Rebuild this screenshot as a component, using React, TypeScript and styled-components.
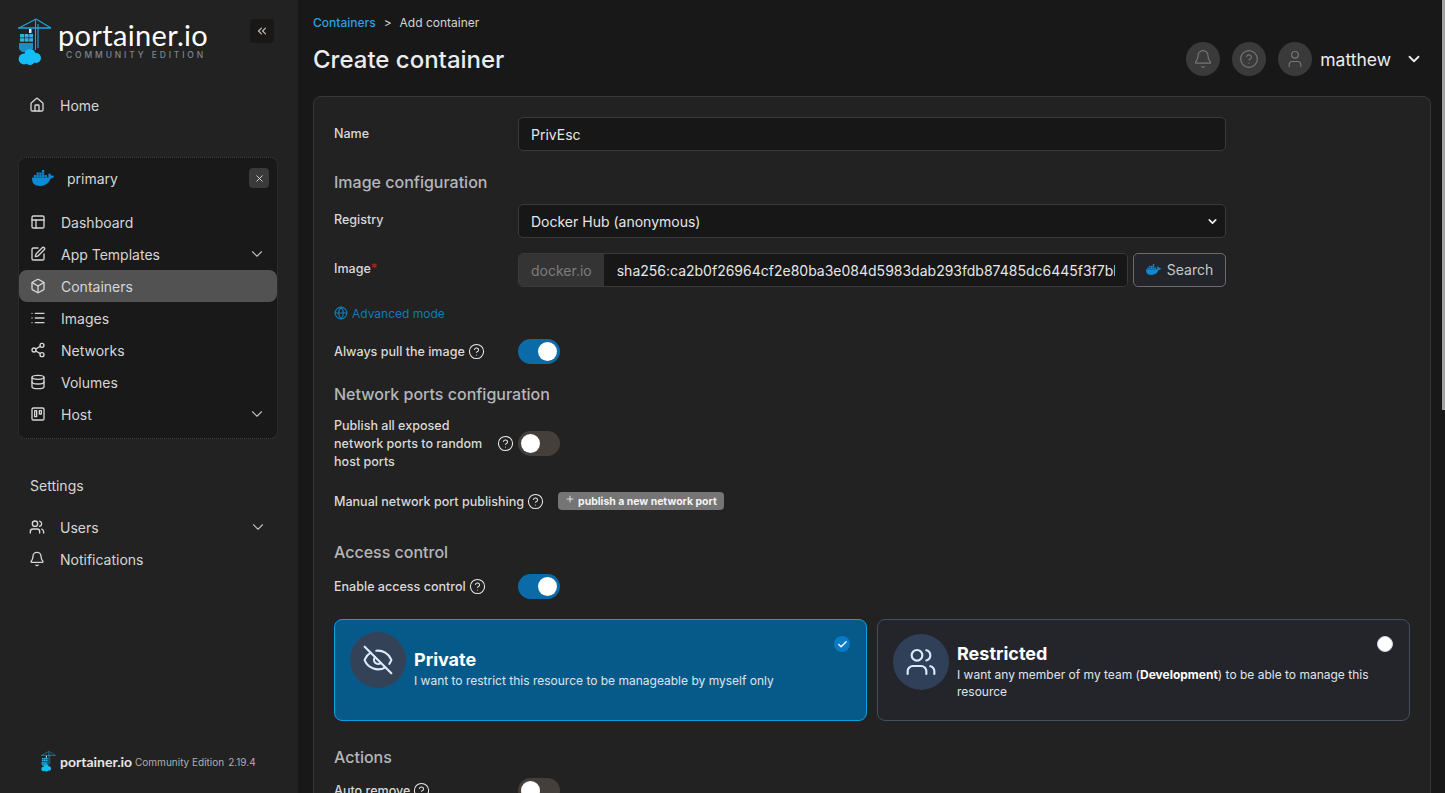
import React from 'react';
import styled, { createGlobalStyle } from 'styled-components';
import {
  Bell,
  Box,
  Check,
  ChevronDown,
  ChevronsLeft,
  CircleHelp,
  Database,
  EyeOff,
  Globe,
  Home,
  List,
  PanelsTopLeft,
  Plus,
  Share2,
  SquarePen,
  Trello,
  User,
  Users,
  X,
} from 'lucide-react';
import { SiDocker } from 'react-icons/si';

const IMAGE_SHA = 'sha256:ca2b0f26964cf2e80ba3e084d5983dab293fdb87485dc6445f3f7bbfc141d36e';

const envItems = [
  { label: 'Dashboard', icon: PanelsTopLeft },
  { label: 'App Templates', icon: SquarePen, expand: true },
  { label: 'Containers', icon: Box, active: true },
  { label: 'Images', icon: List },
  { label: 'Networks', icon: Share2 },
  { label: 'Volumes', icon: Database },
  { label: 'Host', icon: Trello, expand: true },
];

const PortainerMark = ({ width, height }: { width: number; height: number }) => (
  <svg width={width} height={height} viewBox="18 18 34 48">
    <g stroke="#1ba6e0" strokeWidth="1.1" fill="none">
      <path d="M18 28h33" strokeWidth="1.4" />
      <path d="M36 19 19 28M36 19l15 9" />
      <path d="M35.5 19v31M38 24v24" />
      <path d="M30 28v5" />
    </g>
    <rect x="29" y="29" width="2.5" height="4" fill="#d6eef8" />
    <g fill="#2fb1e3">
      <rect x="20" y="34" width="4" height="3.5" />
      <rect x="24.6" y="34" width="4" height="3.5" />
      <rect x="29.2" y="34" width="3.8" height="3.5" />
      <rect x="20" y="38.2" width="4" height="3.5" />
      <rect x="24.6" y="38.2" width="4" height="3.5" />
      <rect x="29.2" y="38.2" width="3.8" height="3.5" />
    </g>
    <path d="M19 43h14v6l-5 3h-6l-3-3z" fill="#1c8fc2" />
    <g fill="#14bdf8">
      <circle cx="24" cy="59" r="5.4" />
      <circle cx="30" cy="54.5" r="5.6" />
      <circle cx="36" cy="58" r="5" />
      <circle cx="30" cy="60.5" r="4.6" />
    </g>
  </svg>
);

const HelpIcon = () => (
  <HelpGlyph>
    <CircleHelp size={17} strokeWidth={1.5} />
  </HelpGlyph>
);

const App = () => {
  return (
    <Page>
      <GlobalStyle />
      <Sidebar>
        <LogoRow>
          <PortainerMark width={34} height={48} />
          <LogoText>
            <LogoName>portainer.io</LogoName>
            <LogoEdition>COMMUNITY EDITION</LogoEdition>
          </LogoText>
          <CollapseButton>
            <ChevronsLeft size={14} />
          </CollapseButton>
        </LogoRow>

        <NavRow>
          <NavIcon>
            <Home size={16} />
          </NavIcon>
          Home
        </NavRow>

        <EnvPanel>
          <EnvHeader>
            <SiDocker size={22} color="#0b8ad6" />
            <EnvName>primary</EnvName>
            <EnvClose>
              <X size={11} />
            </EnvClose>
          </EnvHeader>
          {envItems.map((item) => (
            <EnvRow key={item.label} $active={item.active}>
              <EnvIcon>
                <item.icon size={16} />
              </EnvIcon>
              {item.label}
              {item.expand && (
                <RowChevron>
                  <ChevronDown size={18} strokeWidth={1.5} />
                </RowChevron>
              )}
            </EnvRow>
          ))}
        </EnvPanel>

        <SettingsTitle>Settings</SettingsTitle>
        <NavRow>
          <NavIcon>
            <Users size={16} />
          </NavIcon>
          Users
          <RowChevron>
            <ChevronDown size={18} strokeWidth={1.5} />
          </RowChevron>
        </NavRow>
        <NavRow>
          <NavIcon>
            <Bell size={16} />
          </NavIcon>
          Notifications
        </NavRow>

        <SidebarFooter>
          <PortainerMark width={15} height={21} />
          <FooterName>portainer.io</FooterName>
          <FooterEdition>Community Edition</FooterEdition>
          <FooterEdition>2.19.4</FooterEdition>
        </SidebarFooter>
      </Sidebar>

      <Main>
        <ScrollThumb />
        <Breadcrumbs>
          <a>Containers</a>
          <span>&gt;</span>
          Add container
        </Breadcrumbs>
        <TitleBar>
          <PageTitle>Create container</PageTitle>
          <RoundIcon>
            <Bell size={20} strokeWidth={1.4} />
          </RoundIcon>
          <RoundIcon>
            <CircleHelp size={20} strokeWidth={1.4} />
          </RoundIcon>
          <RoundIcon>
            <User size={20} strokeWidth={1.4} />
          </RoundIcon>
          <UserName>matthew</UserName>
          <UserChevron>
            <ChevronDown size={18} strokeWidth={2.4} />
          </UserChevron>
        </TitleBar>

        <Card>
          <FormRow>
            <FieldLabel $lift={2}>Name</FieldLabel>
            <TextInput readOnly value="PrivEsc" />
          </FormRow>

          <SectionTitle>Image configuration</SectionTitle>
          <FormRow $top={12}>
            <FieldLabel $lift={4}>Registry</FieldLabel>
            <SelectWrap>
              <RegistrySelect defaultValue="hub">
                <option value="hub">Docker Hub (anonymous)</option>
              </RegistrySelect>
              <SelectChevron>
                <ChevronDown size={13} strokeWidth={3} />
              </SelectChevron>
            </SelectWrap>
          </FormRow>
          <FormRow $top={15}>
            <FieldLabel $lift={4}>
              Image<Required>*</Required>
            </FieldLabel>
            <ImageGroup>
              <InputGroup>
                <Addon>docker.io</Addon>
                <GroupInput readOnly value={IMAGE_SHA} />
              </InputGroup>
              <SearchButton>
                <SiDocker size={15} color="#0b8ad6" />
                Search
              </SearchButton>
            </ImageGroup>
          </FormRow>

          <AdvancedLink>
            <Globe size={14} />
            Advanced mode
          </AdvancedLink>

          <SwitchRow $top={18}>
            <SwitchLabel>
              Always pull the image
              <HelpIcon />
            </SwitchLabel>
            <Toggle $on />
          </SwitchRow>

          <SectionTitle $top={20}>Network ports configuration</SectionTitle>

          <SwitchRow $top={11}>
            <SwitchLabel>
              <Wrapped>Publish all exposed network ports to random host ports</Wrapped>
              <HelpIcon />
            </SwitchLabel>
            <Toggle />
          </SwitchRow>

          <ManualRow>
            Manual network port publishing
            <HelpIcon />
            <AddBadge>
              <Plus size={10} strokeWidth={2} />
              publish a new network port
            </AddBadge>
          </ManualRow>

          <SectionTitle $top={32}>Access control</SectionTitle>

          <SwitchRow $top={12}>
            <SwitchLabel>
              Enable access control
              <HelpIcon />
            </SwitchLabel>
            <Toggle $on />
          </SwitchRow>

          <BoxSelector>
            <OptionCard $selected>
              <OptionIcon $top={12} $selected>
                <EyeOff size={32} strokeWidth={1.6} />
              </OptionIcon>
              <OptionText $top={30}>
                <OptionTitle>Private</OptionTitle>
                <OptionDesc>I want to restrict this resource to be manageable by myself only</OptionDesc>
              </OptionText>
              <CheckDot>
                <Check size={11} strokeWidth={3} />
              </CheckDot>
            </OptionCard>
            <OptionCard>
              <OptionIcon $top={14}>
                <Users size={32} strokeWidth={1.6} />
              </OptionIcon>
              <OptionText $top={24}>
                <OptionTitle>Restricted</OptionTitle>
                <OptionDesc>
                  I want any member of my team (<b>Development</b>) to be able to manage this resource
                </OptionDesc>
              </OptionText>
              <RadioDot />
            </OptionCard>
          </BoxSelector>

          <SectionTitle $top={26}>Actions</SectionTitle>
          <SwitchRow $top={11}>
            <SwitchLabel>
              Auto remove
              <HelpIcon />
            </SwitchLabel>
            <Toggle />
          </SwitchRow>
        </Card>
      </Main>
    </Page>
  );
};

export default App;

const GlobalStyle = createGlobalStyle`
  html, body {
    margin: 0;
    height: 100%;
    overflow: hidden;
    background: #181818;
  }
  * {
    box-sizing: border-box;
  }
  body, input, select, button {
    font-family: Inter, "Liberation Sans", sans-serif;
  }
`;

const Page = styled.div`
  display: flex;
  height: 793px;
  overflow: hidden;
`;

const Sidebar = styled.aside`
  background: #222222;
  display: flex;
  flex-direction: column;
  flex: 0 0 298px;
  height: 793px;
  color: #d6d6d6;
  font-size: 14px;
`;

const LogoRow = styled.div`
  display: flex;
  align-items: flex-start;
  height: 66px;
  padding: 18px 0 0 18px;
  margin-bottom: 23px;
`;

const LogoText = styled.div`
  display: flex;
  flex-direction: column;
  margin: 2px 0 0 6px;
  width: 150px;
`;

const LogoName = styled.div`
  color: #fff;
  font-family: Lato, Inter, sans-serif;
  font-size: 29px;
  font-weight: 400;
  line-height: 30px;
  letter-spacing: 0.33px;
`;

const LogoEdition = styled.div`
  color: #7d8594;
  font-size: 8.5px;
  font-weight: 500;
  line-height: 10px;
  letter-spacing: 2.85px;
  margin: 0 0 0 8px;
  white-space: nowrap;
`;

const CollapseButton = styled.div`
  display: flex;
  align-items: center;
  justify-content: center;
  width: 24px;
  height: 24px;
  margin: 1px 0 0 42px;
  border-radius: 4px;
  background: #1a1817;
  color: #bdbdbd;
`;

const NavRow = styled.div`
  display: flex;
  align-items: center;
  height: 32px;
  padding: 0 31px 0 29px;
`;

const NavIcon = styled.span`
  display: flex;
  width: 31px;
`;

const RowChevron = styled.span`
  display: flex;
  margin-left: auto;
  color: #bdbdbd;
`;

const EnvPanel = styled.nav`
  margin: 36px 20px 0 18px;
  height: 282px;
  background: #191919;
  border: 1px dotted #3a3f4a;
  border-radius: 8px;
`;

const EnvHeader = styled.div`
  display: flex;
  align-items: center;
  height: 40px;
  padding: 0 8px 0 13px;
  margin-bottom: 8px;
`;

const EnvName = styled.span`
  margin-left: 13px;
`;

const EnvClose = styled.span`
  display: flex;
  align-items: center;
  justify-content: center;
  width: 20px;
  height: 20px;
  margin-left: auto;
  border-radius: 4px;
  background: #3a3a3a;
  color: #e0e0e0;
`;

const EnvRow = styled.div<{ $active?: boolean }>`
  display: flex;
  align-items: center;
  height: 32px;
  padding: 0 11px 0 11px;
  border-radius: 8px;
  background: ${(props) => (props.$active ? '#525252' : 'transparent')};
`;

const EnvIcon = styled.span`
  display: flex;
  width: 31px;
`;

const SettingsTitle = styled.div`
  margin: 37px 0 15px 30px;
  line-height: 20px;
`;

const SidebarFooter = styled.div`
  display: flex;
  align-items: center;
  margin-top: auto;
  height: 21px;
  margin-bottom: 21px;
  padding-left: 41px;
`;

const FooterName = styled.span`
  margin: 0 3px 0 4px;
  color: #e6e6e6;
  font-family: Lato, Inter, sans-serif;
  font-size: 14px;
  font-weight: 700;
`;

const FooterEdition = styled.span`
  margin-right: 4px;
  color: #b0b0b0;
  font-size: 10px;
  white-space: nowrap;
`;

const Main = styled.main`
  position: relative;
  flex: 1;
  height: 793px;
  padding: 0 14px 0 15px;
  overflow: hidden;
  background: #181818;
`;

const ScrollThumb = styled.div`
  position: absolute;
  top: 0;
  right: 0;
  width: 3px;
  height: 410px;
  background: #a3a3a3;
`;

const Breadcrumbs = styled.div`
  display: flex;
  align-items: center;
  height: 20px;
  margin-top: 12px;
  color: #d4d4d4;
  font-size: 12px;
  a {
    color: #2f9fe6;
    font-weight: 500;
  }
  span {
    margin: 0 8px;
  }
`;

const TitleBar = styled.div`
  display: flex;
  align-items: center;
  height: 34px;
  margin: 10px 0 20px;
`;

const PageTitle = styled.h1`
  flex: 1;
  margin: 0;
  color: #ececec;
  font-size: 24px;
  font-weight: 500;
`;

const RoundIcon = styled.span`
  display: flex;
  align-items: center;
  justify-content: center;
  width: 34px;
  height: 34px;
  margin-left: 12px;
  border-radius: 50%;
  background: #3a3a3a;
  color: #7a7672;
`;

const UserName = styled.span`
  margin-left: 8px;
  color: #ececec;
  font-size: 17.5px;
`;

const UserChevron = styled.span`
  display: flex;
  margin: 0 8px 0 14px;
  color: #ececec;
`;

const Card = styled.section`
  height: 900px;
  padding: 20px;
  background: #222222;
  border: 1px solid #383838;
  border-radius: 8px;
  color: #d9d9d9;
  font-size: 12.55px;
`;

const FormRow = styled.div<{ $top?: number }>`
  display: grid;
  grid-template-columns: 184px 708px;
  align-items: center;
  margin-top: ${(props) => props.$top || 0}px;
`;

const FieldLabel = styled.label<{ $lift: number }>`
  font-weight: 500;
  color: #d9d9d9;
  margin-top: -${(props) => props.$lift}px;
`;

const Required = styled.span`
  color: #b3261e;
`;

const TextInput = styled.input`
  height: 34px;
  width: 100%;
  padding: 0 12px;
  background: #171717;
  border: 1px solid #3a3a3a;
  border-radius: 5px;
  color: #e6e6e6;
  font-size: 14px;
  outline: none;
`;

const SectionTitle = styled.h4<{ $top?: number }>`
  margin: ${(props) => props.$top ?? 21}px 0 0;
  color: #b4b6bb;
  font-size: 16px;
  font-weight: 500;
  line-height: 20px;
`;

const SelectWrap = styled.div`
  position: relative;
`;

const RegistrySelect = styled.select`
  display: block;
  width: 100%;
  height: 34px;
  padding: 0 12px;
  appearance: none;
  background: #171717;
  border: 1px solid #3a3a3a;
  border-radius: 5px;
  color: #e6e6e6;
  font-size: 14px;
  outline: none;
`;

const SelectChevron = styled.span`
  position: absolute;
  top: 11px;
  right: 7px;
  display: flex;
  color: #f0f0f0;
  pointer-events: none;
`;

const ImageGroup = styled.div`
  display: flex;
  gap: 5px;
`;

const InputGroup = styled.div`
  display: flex;
  flex: 1;
  height: 34px;
  border: 1px solid #3a3a3a;
  border-radius: 5px;
  overflow: hidden;
`;

const Addon = styled.span`
  display: flex;
  align-items: center;
  padding: 0 12px;
  background: #343434;
  color: #7c7c7c;
  font-size: 14px;
`;

const GroupInput = styled.input`
  flex: 1;
  min-width: 0;
  padding: 0 12px 0 13px;
  background: #171717;
  border: none;
  color: #e6e6e6;
  font-size: 14px;
  outline: none;
`;

const SearchButton = styled.button`
  display: flex;
  align-items: center;
  justify-content: center;
  gap: 6px;
  width: 93px;
  height: 34px;
  padding: 0 0 1px;
  background: #23252a;
  border: 1px solid #6e6a66;
  border-radius: 5px;
  color: #c8c8c8;
  font-size: 14px;
`;

const AdvancedLink = styled.div`
  display: flex;
  align-items: center;
  gap: 4px;
  margin-top: 18px;
  height: 16px;
  color: #0f7cb5;
  font-size: 12px;
  font-weight: 400;
`;

const HelpGlyph = styled.span`
  display: flex;
  flex: none;
  color: #e8e8e8;
`;

const SwitchRow = styled.div<{ $top: number }>`
  display: flex;
  align-items: center;
  margin-top: ${(props) => props.$top}px;
`;

const SwitchLabel = styled.div`
  display: flex;
  align-items: center;
  gap: 3px;
  flex: 0 0 184px;
  color: #d9d9d9;
  font-weight: 500;
  white-space: nowrap;
`;

const Wrapped = styled.span`
  flex: none;
  width: 158px;
  margin: 2px 2px 0 0;
  line-height: 18px;
  white-space: normal;
`;

const Toggle = styled.span<{ $on?: boolean }>`
  position: relative;
  display: block;
  flex: none;
  width: 42px;
  height: 25px;
  border-radius: 13px;
  background: ${(props) => (props.$on ? '#0b6ba8' : '#453f3b')};
  &::after {
    content: '';
    position: absolute;
    top: 3px;
    left: ${(props) => (props.$on ? '20px' : '3px')};
    width: 19px;
    height: 19px;
    border-radius: 50%;
    background: #fff;
  }
`;

const ManualRow = styled.div`
  display: flex;
  align-items: center;
  gap: 3px;
  height: 18px;
  margin-top: 21px;
  color: #d9d9d9;
  font-weight: 500;
`;

const AddBadge = styled.span`
  display: flex;
  align-items: center;
  gap: 3px;
  height: 18px;
  margin-left: 11px;
  padding: 0 7px;
  border-radius: 4px;
  background: #757575;
  color: #f4f4f4;
  font-size: 10.45px;
  font-weight: 700;
  svg {
    margin-top: -4px;
  }
`;

const BoxSelector = styled.div`
  display: grid;
  grid-template-columns: 1fr 1fr;
  gap: 10px;
  margin-top: 20px;
`;

const OptionCard = styled.div<{ $selected?: boolean }>`
  position: relative;
  display: flex;
  align-items: flex-start;
  height: 102px;
  padding: 0 15px;
  background: ${(props) => (props.$selected ? '#065a8a' : '#23252b')};
  border: 1px solid ${(props) => (props.$selected ? '#0b9fe0' : '#44505e')};
  border-radius: 8px;
`;

const OptionIcon = styled.span<{ $top: number; $selected?: boolean }>`
  display: flex;
  align-items: center;
  justify-content: center;
  flex: none;
  width: 56px;
  height: 56px;
  margin-top: ${(props) => props.$top}px;
  border-radius: 50%;
  background: ${(props) => (props.$selected ? '#344258' : '#2f4058')};
  color: #dbeafe;
`;

const OptionText = styled.div<{ $top: number }>`
  margin: ${(props) => props.$top}px 16px 0 8px;
`;

const OptionTitle = styled.div`
  color: #fff;
  font-size: 18px;
  font-weight: 700;
  line-height: 20px;
`;

const OptionDesc = styled.div`
  margin-top: 2px;
  color: #e0e4ea;
  font-size: 12px;
  line-height: 17px;
  b {
    color: #fff;
  }
`;

const CheckDot = styled.span`
  position: absolute;
  top: 16px;
  right: 16px;
  display: flex;
  align-items: center;
  justify-content: center;
  width: 16px;
  height: 16px;
  border-radius: 50%;
  background: #0a7ac4;
  color: #fff;
`;

const RadioDot = styled.span`
  position: absolute;
  top: 16px;
  right: 16px;
  width: 16px;
  height: 16px;
  border-radius: 50%;
  background: #fff;
  border: 1px solid #cbd5e1;
`;
